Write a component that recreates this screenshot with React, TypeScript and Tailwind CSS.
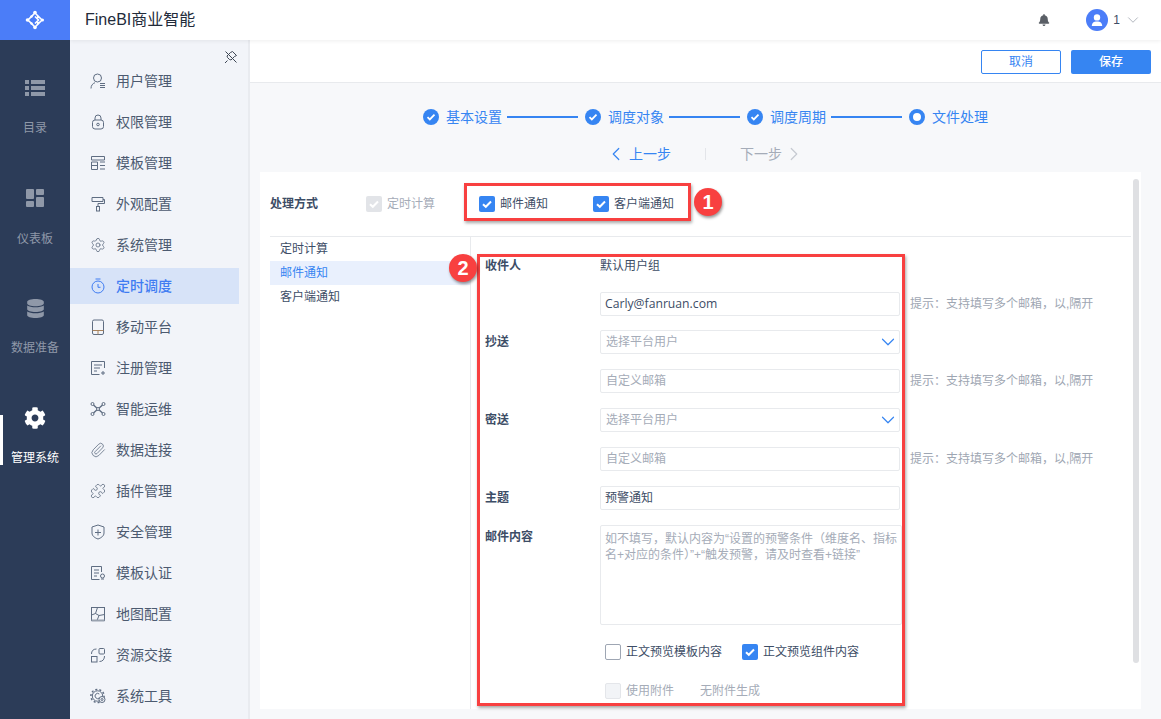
import React from "react";
import { ChevronDown, ChevronLeft, ChevronRight, Paperclip, Puzzle, Settings } from "lucide-react";
import { FaBell, FaCog, FaDatabase } from "react-icons/fa";

const NAV = "#5f6d82";

const S = ({ children, color = NAV }: { children: React.ReactNode; color?: string }) => (
  <svg width="16" height="16" viewBox="0 0 16 16" fill="none" stroke={color} strokeWidth="1" className="shrink-0">
    {children}
  </svg>
);

const navIcons: Record<string, React.ReactNode> = {
  用户管理: (<><circle cx="7.5" cy="5" r="4" /><path d="M1 15.5c0-3 1.6-5 4-5.8M10 10.5h5M10 12.5h5M10 14.5h5" /></>),
  权限管理: (<><rect x="2.5" y="6" width="11" height="9" rx="2.5" /><path d="M5 6V4a3 3 0 0 1 6 0v2" /><circle cx="8" cy="10.5" r="1.3" /></>),
  模板管理: (<><path d="M1.5 1.5h13v3.5h-13zM1.5 7h6v7.5h-6zM1.5 10.5h6M10 7h5M10 10.5h5M10 14h5" /></>),
  外观配置: (<><path d="M2 1.5h11v4H2zM13 3.5h1.5v4H8v3" /><rect x="6.5" y="10.5" width="3" height="4.5" /></>),
  系统管理: <Settings size={16} strokeWidth={1.2} color={NAV} />,
  定时调度: (<><circle cx="8" cy="9" r="6" /><path d="M5.5 1h5M8 6v3.3h2.5" /></>),
  移动平台: (<><rect x="2.5" y="1" width="11" height="14.5" rx="1.5" /><path d="M2.5 11.5h11M8 11.5v4" stroke="#a9825c" /></>),
  注册管理: (<><path d="M14.5 8V1.5h-13v13h8M4 5h8M4 8h6M4 11h3M11 13h4M13 11v4" /></>),
  智能运维: (<><circle cx="2.5" cy="3" r="1.5" /><circle cx="13.5" cy="3" r="1.5" /><circle cx="2.5" cy="13" r="1.5" /><circle cx="13.5" cy="13" r="1.5" /><circle cx="8" cy="8" r="1.5" /><path d="M3.5 4l3.3 3M12.5 4L9.2 7M3.5 12l3.3-3M12.5 12L9.2 9" strokeWidth="1.4" /></>),
  数据连接: <Paperclip size={16} strokeWidth={1.2} color={NAV} />,
  插件管理: <Puzzle size={16} strokeWidth={1.2} color={NAV} />,
  安全管理: (<><path d="M8 1l6 2v6c0 3-3 5-6 6-3-1-6-3-6-6V3z" strokeLinejoin="round" /><path d="M8 5.5v6M5 8.5h6" /></>),
  模板认证: (<><path d="M11.5 7V1.5h-10v13h8M4 5h5M4 8h5M4 11h3" /><circle cx="12.5" cy="11" r="2" /><path d="M11 14h3" /></>),
  地图配置: (<><rect x="1.5" y="1.5" width="13" height="13" /><path d="M1.5 9l4-1.5 2-6M5.5 7.5l3.5 2 5.5-1M9 9.5l-2 5" /><path d="M1.5 14.5h13" strokeWidth="2" stroke="#9aa3b0" /></>),
  资源交接: (<><rect x="9" y="1.5" width="5.5" height="5.5" rx="1" /><rect x="1.5" y="9.5" width="5.5" height="5.5" /><path d="M1.5 7c0-3 1.5-5 5-5M14.5 9c0 3-1.5 5.5-5 5.5" /></>),
  系统工具: (<><circle cx="7.5" cy="8" r="5.2" /><circle cx="7.5" cy="8" r="6.6" strokeWidth="1.5" strokeDasharray="2 2.1" /><path d="M9.3 6A2.6 2.6 0 1 0 9.3 10" /><circle cx="12" cy="11.5" r="3" fill="#f2f4f9" /><circle cx="12" cy="11.5" r="1" /></>),
};

const navItems = Object.keys(navIcons);

function Box({ state }: { state: "on" | "off" | "lock" | "empty" }) {
  if (state === "on")
    return (
      <span className="flex h-4 w-4 shrink-0 items-center justify-center rounded-[2px] bg-[#3685f2]">
        <svg width="12" height="12" viewBox="0 0 12 12" fill="none" stroke="#fff" strokeWidth="2"><path d="M2 6.2l2.8 2.6L10 3.5" /></svg>
      </span>
    );
  if (state === "lock")
    return (
      <span className="flex h-4 w-4 shrink-0 items-center justify-center rounded-[2px] bg-[#e2e4e8]">
        <svg width="12" height="12" viewBox="0 0 12 12" fill="none" stroke="#fff" strokeWidth="2"><path d="M2 6.2l2.8 2.6L10 3.5" /></svg>
      </span>
    );
  if (state === "empty") return <span className="h-4 w-4 shrink-0 rounded-[2px] border border-[#e4e6ea] bg-[#f2f4f7]" />;
  return <span className="h-4 w-4 shrink-0 rounded-[2px] border border-[#9ea6b3] bg-white" />;
}

function Step({ label, current }: { label: string; current?: boolean }) {
  return (
    <div className="flex items-center gap-[7px]">
      {current ? (
        <span className="h-4 w-4 rounded-full border-[4px] border-[#3685f2] bg-white" />
      ) : (
        <span className="flex h-4 w-4 items-center justify-center rounded-full bg-[#3685f2]">
          <svg width="10" height="10" viewBox="0 0 10 10" fill="none" stroke="#fff" strokeWidth="1.8"><path d="M1.5 5.2l2.3 2.2L8.5 2.6" /></svg>
        </span>
      )}
      <span className="text-sm leading-5 text-[#3685f2]">{label}</span>
    </div>
  );
}

const Line = () => <span className="ml-[5px] mr-[7px] h-[2px] w-[71px] bg-[#3685f2]" />;

function Field({ label, children, hint, gap }: { label?: string; children: React.ReactNode; hint?: boolean; gap: string }) {
  return (
    <div className={`flex h-6 items-center ${gap}`}>
      <span className="w-[115px] shrink-0 text-xs font-bold text-[#3d4d66]">{label}</span>
      <div className="w-[300px] shrink-0">{children}</div>
      {hint && <span className="ml-[10px] whitespace-nowrap text-xs text-[#9ea6b2]">提示：支持填写多个邮箱，以,隔开</span>}
    </div>
  );
}

function Input({ text, value }: { text: string; value?: boolean }) {
  return (
    <div className={`flex h-6 items-center rounded-[2px] border border-[#e8eaed] bg-white text-xs ${value ? "pl-[4px] text-[#3d4d66]" : "pl-[5px] text-[#a5acb8]"}`}>
      {text}
    </div>
  );
}

function Select() {
  return (
    <div className="flex h-6 items-center justify-between rounded-[2px] border border-[#e8eaed] bg-white pl-[5px] text-xs text-[#a5acb8]">
      选择平台用户
      <ChevronDown size={22} color="#3685f2" strokeWidth={1.3} />
    </div>
  );
}

export default function App() {
  return (
    <div className="relative flex h-[719px] w-[1161px] overflow-hidden bg-white font-['Liberation_Sans','Noto_Sans_CJK_SC',sans-serif]">
      {/* rail */}
      <aside className="z-20 flex w-[70px] shrink-0 flex-col bg-[#2c3c58]">
        <div className="flex h-10 items-center justify-center bg-[#4b7df8]">
          <svg width="20" height="20" viewBox="0 0 20 20" fill="none" stroke="#fff" strokeWidth="1.6">
            <path d="M10 3l7 7-7 7-7-7z" />
            <path d="M10 6.5l3.5 3.5-3.5 3.5" />
            <g fill="#fff" stroke="none">
              <circle cx="10" cy="2.5" r="1.8" /><circle cx="2.5" cy="10" r="1.8" /><circle cx="17.5" cy="10" r="1.5" /><circle cx="10" cy="17.5" r="1.8" /><circle cx="6.5" cy="6.5" r="1.2" /><circle cx="13" cy="7" r="1.2" /><circle cx="6.5" cy="13.5" r="1.2" /><circle cx="13" cy="13" r="1.2" />
            </g>
          </svg>
        </div>
        <div className="flex h-[111px] flex-col items-center pt-[39px]">
          <svg width="20" height="18" viewBox="0 0 20 18" fill="#8f98a8" className="h-[18px]">
            <rect x="0" y="1" width="4" height="4" /><rect x="6" y="1" width="14" height="4" /><rect x="0" y="7" width="4" height="4" /><rect x="6" y="7" width="14" height="4" /><rect x="0" y="13" width="4" height="4" /><rect x="6" y="13" width="14" height="4" />
          </svg>
          <span className="mt-[23px] text-xs leading-4 text-[#8f98a8]">目录</span>
        </div>
        <div className="flex h-[110px] flex-col items-center pt-[37px]">
          <svg width="20" height="20" viewBox="0 0 20 20" fill="#8f98a8">
            <rect x="1" y="1" width="8" height="10" rx="1" /><rect x="11" y="1" width="8" height="6" rx="1" /><rect x="1" y="13" width="8" height="6" rx="1" /><rect x="11" y="9" width="8" height="10" rx="1" />
          </svg>
          <span className="mt-[23px] text-xs leading-4 text-[#8f98a8]">仪表板</span>
        </div>
        <div className="flex h-[109px] flex-col items-center pt-[38px]">
          <FaDatabase size={19} color="#8f98a8" />
          <span className="mt-[22px] text-xs leading-4 text-[#8f98a8]">数据准备</span>
        </div>
        <div className="relative flex h-[110px] flex-col items-center pt-[37px]">
          <span className="absolute left-0 top-[45px] h-[50px] w-[3px] bg-white" />
          <FaCog size={22} color="#fff" />
          <span className="mt-[21px] text-xs leading-4 text-white">管理系统</span>
        </div>
      </aside>

      <div className="flex min-w-0 flex-1 flex-col">
        {/* top bar */}
        <header className="z-10 flex h-10 shrink-0 items-center bg-white pl-[15px] pr-[19px] shadow-[0_1px_4px_rgba(0,0,0,0.07)]">
          <span className="text-base text-[#222b3a]">FineBI商业智能</span>
          <FaBell size={12} color="#5a5f66" className="ml-auto" />
          <span className="ml-[36px] flex h-[22px] w-[22px] items-center justify-center rounded-full bg-[#4b7df8]">
            <svg width="14" height="14" viewBox="0 0 14 14" fill="#fff"><circle cx="7" cy="4.4" r="3.2" /><path d="M1.8 13c0-3.4 2-4.6 5.2-4.6s5.2 1.2 5.2 4.6z" /></svg>
          </span>
          <span className="ml-[5px] text-xs text-[#3d4d66]">1</span>
          <ChevronDown size={18} color="#aab0b8" strokeWidth={1.2} className="ml-[4px]" />
        </header>

        <div className="flex min-h-0 flex-1">
          {/* nav */}
          <nav className="flex w-[180px] shrink-0 flex-col border-r-2 border-[#e9ebf0] bg-[#f2f4f9]">
            <div className="flex h-[20.5px] justify-end pr-[10px] pt-[10px]">
              <svg width="14" height="14" viewBox="0 0 14 14" fill="none" stroke="#3d4654" strokeWidth="1" className="shrink-0">
                <path d="M8.5 1.5l4 4-2 1-3.5 3.5-1.5-.5-2-2-.5-1.5L6.5 2.5zM3.5 10.5L1 13M1.5 1.5l11 11" />
              </svg>
            </div>
            {navItems.map((n) => {
              const active = n === "定时调度";
              return (
                <div key={n} className="flex h-[41px] shrink-0 items-center">
                  <div className={`flex h-9 w-[169px] items-center gap-[10px] pl-[20px] ${active ? "bg-[#d7e3f8] font-medium text-[#3f7cf2]" : "text-[#4c5a70]"}`}>
                    <S color={active ? "#3f7cf2" : NAV}>{navIcons[n]}</S>
                    <span className="text-sm">{n}</span>
                  </div>
                </div>
              );
            })}
          </nav>

          {/* main */}
          <main className="relative flex min-w-0 flex-1 flex-col bg-[#f7f8fa]">
            <div className="flex h-[43px] shrink-0 items-center justify-end gap-[10px] border-b border-[#e8eaed] bg-white pr-[10px] pt-[2px]">
              <button className="h-6 w-20 rounded-[2px] border border-[#3685f2] bg-white text-xs text-[#3685f2]">取消</button>
              <button className="h-6 w-20 rounded-[2px] bg-[#3685f2] text-xs font-medium text-white">保存</button>
            </div>

            <div className="mt-[24px] flex h-5 items-center justify-center">
              <Step label="基本设置" /><Line /><Step label="调度对象" /><Line /><Step label="调度周期" /><Line /><Step label="文件处理" current />
            </div>

            <div className="mt-[17px] flex h-5 items-center justify-center pr-[1px]">
              <ChevronLeft size={22} color="#3685f2" strokeWidth={1.3} />
              <span className="ml-[2px] text-sm text-[#3685f2]">上一步</span>
              <span className="mx-[34px] h-3 w-px bg-[#e3e5e9]" />
              <span className="text-sm text-[#a5acb8]">下一步</span>
              <ChevronRight size={22} color="#c6cad1" strokeWidth={1.3} className="ml-[1px]" />
            </div>

            {/* panel */}
            <section className="ml-[10px] mt-[8px] flex h-[537px] w-[881px] bg-white">
              <div className="flex w-[871px] flex-col pl-[10px]">
                <div className="flex h-[65px] shrink-0 items-center border-b border-[#e8eaed]">
                  <span className="w-[96px] text-xs font-bold text-[#3d4d66]">处理方式</span>
                  <Box state="lock" />
                  <span className="ml-[5px] w-[48px] whitespace-nowrap text-xs text-[#a5acb8]">定时计算</span>
                  <span className="ml-[44px]"><Box state="on" /></span>
                  <span className="ml-[5px] w-[93px] whitespace-nowrap text-xs text-[#3d4d66]">邮件通知</span>
                  <Box state="on" />
                  <span className="ml-[5px] whitespace-nowrap text-xs text-[#3d4d66]">客户端通知</span>
                </div>
                <div className="flex min-h-0 flex-1">
                  <div className="w-[201px] shrink-0 border-r border-[#e8eaed] text-xs text-[#3d4d66]">
                    <div className="flex h-6 items-center pl-[10px]">定时计算</div>
                    <div className="flex h-6 items-center bg-[#e9f0fd] pl-[10px] text-[#3685f2]">邮件通知</div>
                    <div className="flex h-6 items-center pl-[10px]">客户端通知</div>
                  </div>
                  <div className="min-w-0 flex-1 overflow-hidden pl-[14px] pt-[17px]">
                    <div className="flex h-6 items-center">
                      <span className="w-[115px] text-xs font-bold text-[#3d4d66]">收件人</span>
                      <span className="text-xs text-[#3d4d66]">默认用户组</span>
                    </div>
                    <div className="h-[14px]" />
                    <Field hint gap="mb-[14px]">
                      <div className="flex h-6 items-center rounded-[2px] border border-[#e8eaed] bg-white pl-[4px] font-['Open_Sans',sans-serif] text-[12.2px] text-[#3d4d66]">Carly@fanruan.com</div>
                    </Field>
                    <Field label="抄送" gap="mb-[15px]"><Select /></Field>
                    <Field hint gap="mb-[15px]"><Input text="自定义邮箱" /></Field>
                    <Field label="密送" gap="mb-[15px]"><Select /></Field>
                    <Field hint gap="mb-[15px]"><Input text="自定义邮箱" /></Field>
                    <Field label="主题" gap="mb-[15px]"><Input value text="预警通知" /></Field>
                    <div className="flex">
                      <span className="w-[115px] shrink-0 pt-[4px] text-xs font-bold text-[#3d4d66]">邮件内容</span>
                      <div className="h-[100px] w-[302px] shrink-0 rounded-[2px] border border-[#e8eaed] pb-[3px] pl-[4px] pt-[5px] text-xs leading-4 text-[#a5acb8]">
                        如不填写，默认内容为“设置的预警条件（维度名、指标名+对应的条件）”+“触发预警，请及时查看+链接”
                      </div>
                    </div>
                    <div className="ml-[120px] mt-[19px] flex h-4 items-center text-xs text-[#3d4d66]">
                      <Box state="off" />
                      <span className="ml-[5px] w-[116px]">正文预览模板内容</span>
                      <Box state="on" />
                      <span className="ml-[5px]">正文预览组件内容</span>
                    </div>
                    <div className="ml-[120px] mt-[23px] flex h-4 items-center text-xs text-[#a5acb8]">
                      <Box state="empty" />
                      <span className="ml-[5px] w-[74px]">使用附件</span>
                      <span>无附件生成</span>
                    </div>
                  </div>
                </div>
              </div>
              <div className="flex w-[10px] shrink-0 justify-center pt-[7px]">
                <div className="h-[484px] w-[6px] rounded-full bg-[#dfe0e3]" />
              </div>
            </section>

            {/* annotations */}
            <div className="pointer-events-none absolute left-[214px] top-[143px] h-[38px] w-[227px] border-[3px] border-[#f84040] shadow-[1px_2px_3px_rgba(0,0,0,0.35)]" />
            <div className="absolute left-[444px] top-[148px] flex h-[28px] w-[28px] items-center justify-center rounded-full bg-[#f84040] text-xl font-bold text-white shadow-[1px_2px_3px_rgba(0,0,0,0.4)]">1</div>
            <div className="pointer-events-none absolute left-[227px] top-[214px] h-[452px] w-[428px] border-[3px] border-[#f84040] shadow-[1px_2px_3px_rgba(0,0,0,0.35)]" />
            <div className="absolute left-[199px] top-[214px] flex h-[28px] w-[28px] items-center justify-center rounded-full bg-[#f84040] text-xl font-bold text-white shadow-[1px_2px_3px_rgba(0,0,0,0.4)]">2</div>
          </main>
        </div>
      </div>
    </div>
  );
}
